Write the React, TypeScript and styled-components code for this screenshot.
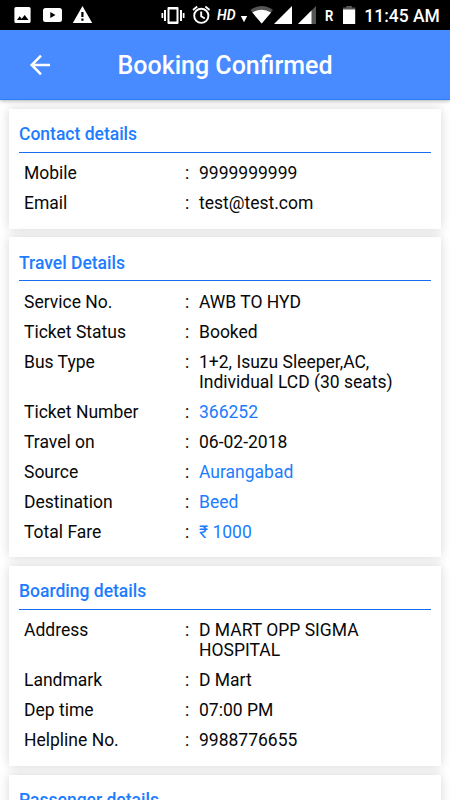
import React from "react";
import styled, { createGlobalStyle } from "styled-components";

const Global = createGlobalStyle`
  *{box-sizing:border-box}
  body{margin:0;background:#fff;font-family:Roboto,sans-serif;color:#080808;overflow:hidden}
`;
const Screen = styled.div`width:450px;height:800px;overflow:hidden;display:flex;flex-direction:column;background:#fff;`;
const Status = styled.div`height:30px;flex:none;background:#000;`;
const StatusArt = styled.svg`display:block;font-family:Roboto,sans-serif;`;
const Header = styled.header`
  height:70px;flex:none;background:#488aff;display:grid;grid-template-columns:80px 1fr 80px;align-items:center;justify-items:center;
  color:#fff;border-bottom:1px solid #2580fa;box-shadow:0 1px 4px rgba(0,0,0,.3);z-index:1;
`;
const Title = styled.h1`margin:0;padding-top:2px;font-size:25px;font-weight:500;line-height:30px;white-space:nowrap;`;
const Cards = styled.main`padding:8.8px 9px 0;display:flex;flex-direction:column;gap:8.9px;`;
const Card = styled.section`flex:none;background:#fff;padding:10px 10px 10.6px;box-shadow:0 0 10px rgba(0,0,0,.16);`;
const Heading = styled.h2`margin:0 0 5.2px;padding-top:.2px;height:34px;border-bottom:1px solid #186cf0;font-size:17.5px;line-height:30px;font-weight:500;color:#207cff;`;
const Row = styled.div`display:grid;grid-template-columns:161px 14px 1fr;padding:5px;font-size:17.5px;line-height:20px;`;
const Value = styled.span<{ $accent?: boolean }>`color:${p => p.$accent ? "#207cff" : "inherit"};white-space:pre-line;`;

type Item = [string, string, boolean?];
const sections: { title: string; items: Item[] }[] = [
  { title: "Contact details", items: [["Mobile", "9999999999"], ["Email", "test@test.com"]] },
  { title: "Travel Details", items: [["Service No.", "AWB TO HYD"], ["Ticket Status", "Booked"], ["Bus Type", "1+2, Isuzu Sleeper,AC,\nIndividual LCD (30 seats)"], ["Ticket Number", "366252", true], ["Travel on", "06-02-2018"], ["Source", "Aurangabad", true], ["Destination", "Beed", true], ["Total Fare", "₹ 1000", true]] },
  { title: "Boarding details", items: [["Address", "D MART OPP SIGMA\nHOSPITAL"], ["Landmark", "D Mart"], ["Dep time", "07:00 PM"], ["Helpline No.", "9988776655"]] },
  { title: "Passenger details", items: [] },
];

function StatusIcons() {
  return <StatusArt width="450" height="30" fill="#fff">
    <path fillRule="evenodd" d="M16 7h13q1.600 0 1.600 1.600v12.800q0 1.600-1.600 1.600H16q-1.600 0-1.600-1.600V8.600Q14.400 7 16 7ZM17 20h11.500l-3.800-5-3 3.700-2.100-2.500Z" />
    <path fillRule="evenodd" d="M45.500 8h14q2.500 0 2.500 2.500v9q0 2.500-2.500 2.500h-14q-2.500 0-2.500-2.500v-9Q43 8 45.500 8ZM50.300 12v6l5.200-3Z" />
    <path fillRule="evenodd" d="M82.500 6 92.200 23H72.800ZM81.300 12v5h2.200v-5ZM81.300 18.500v2.300h2.200v-2.300Z" />
    <path fillRule="evenodd" d="M168.500 7h9q1 0 1 1v15q0 1-1 1h-9q-1 0-1-1V8q0-1 1-1ZM169.500 9.500v12h7v-12ZM164 10h2v11h-2ZM180 10h2v11h-2ZM161.500 13h1.700v5h-1.700ZM182.800 13h1.700v5h-1.700Z" />
    <g fill="none" stroke="#fff" strokeWidth="1.900">
      <circle cx="201.300" cy="15.800" r="7.100" />
      <path d="M201.200 11.500v4.800l3.600 2.200M193 10l4.200-3.400M209.600 10l-4.200-3.400" />
    </g>
    <text x="217" y="20" fontSize="15" fontWeight="600" fontStyle="italic" textLength="18.500" lengthAdjust="spacingAndGlyphs">HD</text>
    <path d="M240.800 16h6.400l-3.200 6.300Z" />
    <path fill="#555" d="M250.300 10q11.700-8 22.700 0L261.700 23.500Z" />
    <path d="M252.300 12.400q9.400-5.400 18.800 0l-9.400 11.100Z" />
    <path d="M292 6v18h-18Z" />
    <path fill="#555" d="M316 6v18h-18Z" />
    <path d="M311.500 10.500V24H298Z" />
    <text x="325" y="20.700" fontSize="15" fontWeight="700" textLength="8.300" lengthAdjust="spacingAndGlyphs">R</text>
    <path fill="#555" d="M346.300 6h5.600v1.400h3.300V10h-12.200V7.400h3.300Z" />
    <path d="M343 9.500h12.200V24H343Z" />
    <text x="364.300" y="22.200" fontSize="18.500" fontWeight="500" textLength="75.500" lengthAdjust="spacingAndGlyphs">11:45 AM</text>
  </StatusArt>;
}

export default function App() {
  return <Screen><Global />
    <Status><StatusIcons /></Status>
    <Header>
      <svg width="22" height="22" viewBox="0 0 22 22"><path d="M21 11H2.500M12 1.700 2.700 11l9.300 9.300" fill="none" stroke="#fff" strokeWidth="2.500" /></svg>
      <Title>Booking Confirmed</Title>
    </Header>
    <Cards>{sections.map(s => <Card key={s.title}><Heading>{s.title}</Heading>
      {s.items.map(([l, v, a]) => <Row key={l}><span>{l}</span><span>:</span><Value $accent={a}>{v}</Value></Row>)}
    </Card>)}</Cards>
  </Screen>;
}
